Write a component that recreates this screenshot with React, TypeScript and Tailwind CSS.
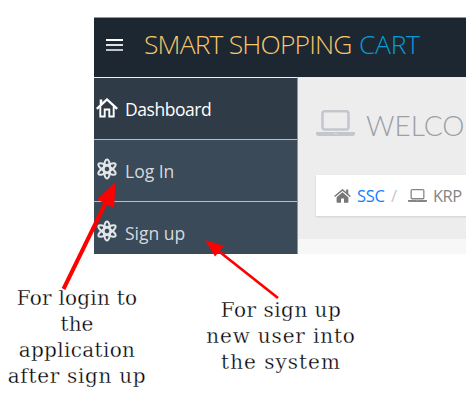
import type { ReactNode } from "react";

const sans = "font-['Open_Sans',sans-serif]";

function HomeOutline() {
  return (
    <svg width="22" height="20" viewBox="0 0 22 20" fill="none" stroke="#fff" strokeWidth="1.9">
      <path d="M.8 10.800 11 1.500l10.200 9.300" strokeWidth="2.300" />
      <path d="M4.300 8.500V18.500h4.400v-7h4.600v7h4.400V8.500" />
      <path d="M5 6.500V1.500" strokeWidth="2.600" />
    </svg>
  );
}

function Atom() {
  return (
    <svg width="20" height="22" viewBox="0 0 20 22" fill="none" stroke="#e3e6e9" strokeWidth="2">
      <ellipse cx="10" cy="11" rx="3.200" ry="9.600" />
      <ellipse cx="10" cy="11" rx="3.200" ry="9.800" transform="rotate(60 10 11)" />
      <ellipse cx="10" cy="11" rx="3.200" ry="9.800" transform="rotate(120 10 11)" />
    </svg>
  );
}

function Laptop({ className }: { className: string }) {
  return (
    <svg className={className} viewBox="0 0 1920 1280" preserveAspectRatio="none" fill="currentColor">
      <path
        fillRule="evenodd"
        d="M416 1024q-66 0-113-47t-47-113V160q0-66 47-113T416 0h1088q66 0 113 47t47 113v704q0 66-47 113t-113 47H416zM384 160v704q0 13 9.500 22.500t22.500 9.500h1088q13 0 22.500-9.500t9.500-22.500V160q0-13-9.500-22.500T1504 128H416q-13 0-22.500 9.500T384 160zM1760 1088h160v96q0 40-47 68t-113 28H160q-66 0-113-28t-47-68v-96h1760zm-720 96q16 0 16-16t-16-16H880q-16 0-16 16t16 16h160z"
      />
    </svg>
  );
}

function SolidHome() {
  return (
    <svg className="mt-[1px] h-[14px] w-[17px] shrink-0" viewBox="0 0 17 14" fill="#777">
      <path d="M8.500 3.300 14.400 8.200V13.100q0 .700-.700.700H10V9.500H7v4.300H3.300q-.700 0-.700-.700V8.200z" />
      <path d="M.6 7.500 8.500.900l7.900 6.600" fill="none" stroke="#777" strokeWidth="1.500" />
      <path d="M12.100.600h2.200v4.800l-2.200-1.800z" />
    </svg>
  );
}

function MenuRow({ icon, children, className }: { icon: ReactNode; children: ReactNode; className: string }) {
  return (
    <div className={`flex items-start pl-[2px] ${className}`}>
      <span className="flex w-[29px] shrink-0">{icon}</span>
      <span className="mt-[-2px] text-[17.500px] leading-[24px]">{children}</span>
    </div>
  );
}

export default function App() {
  return (
    <div className={`relative h-[405px] w-[466px] overflow-hidden bg-white pt-[17px] ${sans}`}>
      <div className="ml-[94px] h-[237px] w-[372px] overflow-hidden">
        <header className="flex h-[60px] items-center border-t border-[#93979d] bg-[#1c2732] pl-[12px]">
          <div className="mt-[-5px] flex h-[12px] w-[17px] flex-col justify-between">
            <i className="h-[2px] bg-white" />
            <i className="h-[2px] bg-[#dfe1e4]" />
            <i className="h-[2px] bg-[#bfc3c9]" />
          </div>
          <div className="mt-[-8px] ml-[21px] flex text-[26.500px] leading-[36px] font-light whitespace-nowrap">
            <span className="w-[215px] tracking-[-0.850px] text-[#f7c66c]">SMART SHOPPING</span>
            <span className="tracking-[-0.350px] text-[#069bd8]">CART</span>
          </div>
        </header>
        <div className="flex h-[177px]">
          <nav className="w-[204px] shrink-0 border-t border-r border-t-[#eef0f4] border-r-[#8d939b] bg-[#3a4a58] text-[#d5d9de]">
            <MenuRow icon={<span className="-mt-px"><HomeOutline /></span>} className="h-[62px] border-b border-[#b9bdc1] bg-[#2f3b47] pt-[21px] text-white">
              <span className="tracking-[-0.450px]">Dashboard</span>
            </MenuRow>
            <MenuRow icon={<span className="pl-px"><Atom /></span>} className="h-[62px] border-b border-[#b9bdc1] pt-[18px]">
              <span className="relative top-[3px]">Log In</span>
            </MenuRow>
            <MenuRow icon={<span className="pl-px"><Atom /></span>} className="h-[53px] pt-[18px]">
              <span className="relative top-[3px]">Sign up</span>
            </MenuRow>
          </nav>
          <main className="min-w-0 flex-1 bg-[#f7f7f7]">
            <div className="h-[162px] bg-[#ededed] pt-[28px] pl-[18px]">
              <div className="flex h-[40px] items-start text-[#9b9fa5]">
                <Laptop className="mt-[5px] h-[26px] w-[39px] shrink-0 text-[#c3c7cd]" />
                <span className="ml-[11px] font-['Lato',sans-serif] text-[28px] leading-[40px] font-light whitespace-nowrap">WELCO</span>
              </div>
              <div className="mt-[30px] flex h-[41px] w-[200px] items-center bg-white pl-[18px] text-[16.500px] whitespace-nowrap text-[#858585] shadow-[0_1px_2px_#cfcfcf]">
                <SolidHome />
                <span className="ml-[6px] w-[34px] pt-px tracking-[-0.300px] text-[#147efb]">SSC</span>
                <span className="w-[17px] pt-px text-[#c5c5c5]">/</span>
                <Laptop className="h-[13px] w-[19px] shrink-0" />
                <span className="ml-[6px] pt-px tracking-[-0.500px]">KRP</span>
              </div>
            </div>
          </main>
        </div>
      </div>

      <div className="flex items-start pt-[31px] text-center font-['DejaVu_Serif',serif] text-[20px] leading-[26px] whitespace-nowrap text-black [-webkit-text-stroke:0.300px_white]">
        <p className="flex w-[154px] flex-col items-center">
          <span className="tracking-[0.250px]">For login to</span>
          <span>the</span>
          <span className="tracking-[0.350px]">application</span>
          <span className="tracking-[0.700px]">after sign up</span>
        </p>
        <p className="ml-[48px] flex w-[158px] flex-col items-center pt-[12px]">
          <span className="tracking-[0.500px]">For sign up</span>
          <span className="tracking-[0.850px]">new user into</span>
          <span className="tracking-[1px]">the system</span>
        </p>
      </div>

      <svg className="absolute top-0 left-0" width="466" height="405" viewBox="0 0 466 405" fill="#f00" stroke="#f00">
        <path d="M63.500 289 107 200" strokeWidth="4" />
        <path d="M115.500 182 97 199.500 114 208z" stroke="none" />
        <path d="M278 298 216 249" strokeWidth="2.700" />
        <path d="M205 240 224 246 215 256.500z" stroke="none" />
      </svg>
    </div>
  );
}
